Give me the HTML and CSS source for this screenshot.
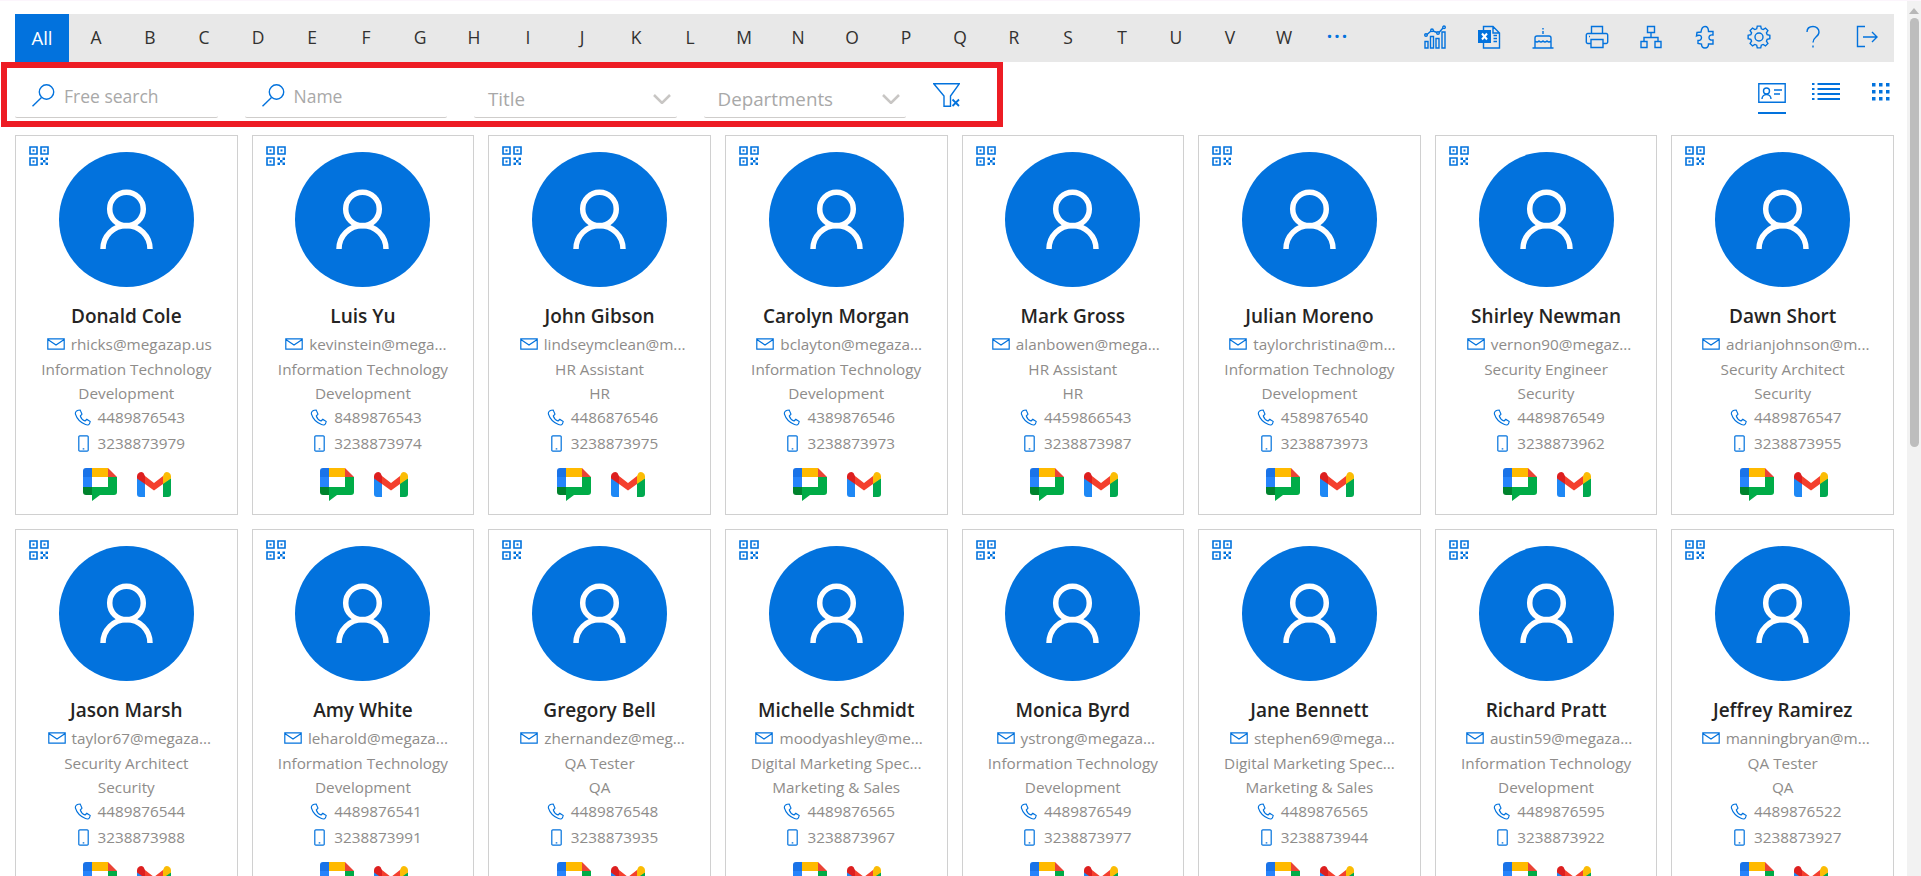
FILE: index.html
```html
<!DOCTYPE html>
<html lang="en">
<head>
    <meta charset="UTF-8">
    <meta name="viewport" content="width=device-width, initial-scale=1.0">
    <title>Employee Directory</title>
    <link rel="stylesheet" href="styles.css">
</head>
<body>

    <!-- Shared icons -->
    <svg class="sprite" xmlns="http://www.w3.org/2000/svg">
        <symbol id="i-chart" viewBox="0 0 24 24">
            <path d="M2 16.5h3V23H2zM7.5 11.5h3V23h-3zM13 13.5h3V23h-3zM19 7h3v16h-3zM4 9.5l4-3.5M10 6l4 1.5M16 7.5l4-4.5"/>
            <circle cx="3" cy="10" r="1.3"/><circle cx="9" cy="5.3" r="1.3"/><circle cx="15" cy="8" r="1.3"/><circle cx="21" cy="2.3" r="1.3"/>
        </symbol>
        <symbol id="i-excel" viewBox="0 0 24 24">
            <path d="M6.5 5V1.5H16L22.5 8v15H6.5v-5M16 1.5V8h6.5M16.5 10.5H20M16.5 13.5H20M16.5 16.5H20"/>
            <rect class="solid" x="1" y="5" width="13" height="13"/>
            <path class="knock" d="M5 8.5l5 6M10 8.5l-5 6"/>
        </symbol>
        <symbol id="i-cake" viewBox="0 0 24 24">
            <path d="M12 3v1.500M12 6v3M4 23V13a2 2 0 0 1 2-2h12a2 2 0 0 1 2 2v10M1.500 23h21M4 16q2 2 4 0q2 2 4 0q2 2 4 0q2 2 4 0"/>
        </symbol>
        <symbol id="i-print" viewBox="0 0 24 24">
            <path d="M6.500 8.500V1.500h11v7M6 18.500H2.800A1.500 1.500 0 0 1 1.300 17v-7a1.500 1.500 0 0 1 1.500-1.500h18.400a1.500 1.500 0 0 1 1.500 1.500v7a1.500 1.500 0 0 1-1.500 1.500H18M6 14.500h12V22.500H6zM4 11.500h1"/>
        </symbol>
        <symbol id="i-org" viewBox="0 0 24 24">
            <path d="M8.500 1.500h7v6h-7zM12 7.500v5M5 16.500v-4h14v4M2 16.500h6v6H2zM16 16.500h6v6h-6z"/>
        </symbol>
        <symbol id="i-puzzle" viewBox="0 0 24 24">
            <path d="M4 7.500L8 7C8.500 3 10 1.500 12 1.500S15.500 3.500 15.500 6.500H20V10c-2.500-.5-4 .5-4 2.500s1.500 3 4 2.500v4h-4.500c0 2.500-1.500 4-3.500 4s-3.500-1.500-3.500-4L5 18.500v-3c2 0 3.500-1 3.500-3S6 9.500 3.500 11z"/>
        </symbol>
        <symbol id="i-gear" viewBox="0 0 24 24">
            <polygon points="9.66,3.83 10.28,1.14 13.72,1.14 14.34,3.83 16.12,4.57 18.47,3.1 20.9,5.53 19.43,7.88 20.17,9.66 22.86,10.28 22.86,13.72 20.17,14.34 19.43,16.12 20.9,18.47 18.47,20.9 16.12,19.43 14.34,20.17 13.72,22.86 10.28,22.86 9.66,20.17 7.88,19.43 5.53,20.9 3.1,18.47 4.57,16.12 3.83,14.34 1.14,13.72 1.14,10.28 3.83,9.66 4.57,7.88 3.1,5.53 5.53,3.1 7.88,4.57"/>
            <circle cx="12" cy="12" r="4"/>
        </symbol>
        <symbol id="i-help" viewBox="0 0 24 24">
            <path d="M6 7c0-3.500 2.500-5.500 6-5.500S18 4 18 7c0 2.500-1.500 4-3.500 5.500-1.700 1.300-2.500 2.500-2.500 5M12 20.500V22.500"/>
        </symbol>
        <symbol id="i-exit" viewBox="0 0 24 24">
            <path d="M10 1.500H2.500v20H10M8 12h14M17 7l5 5-5 5"/>
        </symbol>
        <symbol id="i-search" viewBox="0 0 24 24">
            <circle cx="15.500" cy="8" r="7.200"/>
            <path d="M10.500 13.500L1.500 22.300"/>
        </symbol>
        <symbol id="i-chevron" viewBox="0 0 18 10">
            <path d="M1 1l8 8 8-8"/>
        </symbol>
        <symbol id="i-qr" viewBox="0 0 20 20">
            <path d="M1 1h7v7H1zM12 1h7v7h-7zM1 12h7v7H1z"/>
            <path class="solid" d="M3.500 3.500h2v2h-2zM14.500 3.500h2v2h-2zM3.500 14.500h2v2h-2zM11.500 11.500h2.500v2.500h-2.500zM16.500 11.500h2.500v2.500h-2.500zM14 14h2.500v2.500H14zM11.500 16.500h2.500V19h-2.500zM16.500 16.500h2.500V19h-2.500z"/>
        </symbol>
        <symbol id="i-mail" viewBox="0 0 18 12">
            <path d="M.800.800h16.400v10.400H.800zM.800 1.500L9 7l8.200-5.500"/>
        </symbol>
        <symbol id="i-phone" viewBox="0 0 17 17">
            <path d="M4.200 1.200L6.200 1 8 5.200 6.300 7c.7 2.500 2.600 4.200 4.700 5l1.800-1.700 3.400 2.300-.7 2.200c-.7 1.200-2.300 1.500-4 .8-5-2.100-8.700-6.100-10.100-10.600C1 3.200 2.600 1.600 4.200 1.200z"/>
        </symbol>
        <symbol id="i-mobile" viewBox="0 0 11 17">
            <path d="M1.800.800h7.400a1 1 0 0 1 1 1v13.400a1 1 0 0 1-1 1H1.800a1 1 0 0 1-1-1V1.800a1 1 0 0 1 1-1zM4.700 13.800h1.600"/>
        </symbol>
        <symbol id="i-chat" viewBox="0 0 34 33">
            <path fill="#1a73e8" d="M3 0h6v9H0V3a3 3 0 0 1 3-3z"/>
            <path fill="#2684fc" d="M0 9h9v10H0z"/>
            <path fill="#00832d" d="M0 19h9v8H3a3 3 0 0 1-3-3z"/>
            <path fill="#ffba00" d="M9 0h16v9H9z"/>
            <path fill="#ea4335" d="M25 0l9 9h-9z"/>
            <path fill="#00ac47" d="M25 9h9v15a3 3 0 0 1-3 3H17l-8 6v-6-8h16z"/>
        </symbol>
        <symbol id="i-gmail" viewBox="0 0 34 25">
            <path fill="#1e88f5" d="M0 6v16a3 3 0 0 0 3 3h5V11z"/>
            <path fill="#00a94f" d="M26 11v14h5a3 3 0 0 0 3-3V6z"/>
            <path fill="#f4402e" d="M8 4l9 7 9-7v8l-9 6.500L8 12z"/>
            <path fill="#dd1f1f" d="M0 4a4 4 0 0 1 6.500-3L8 4v8L0 6.500z"/>
            <path fill="#fbbc04" d="M26 4l1.500-3A4 4 0 0 1 34 4v2.500L26 12z"/>
        </symbol>
        <symbol id="i-person" viewBox="0 0 135 135">
            <circle class="avatar-bg" cx="67.500" cy="67.500" r="67.500"/>
            <circle class="avatar-line" cx="67.500" cy="57" r="16.800"/>
            <path class="avatar-line" d="M44 97a23.500 23.500 0 0 1 47 0"/>
        </symbol>
    </svg>

    <div class="page">
        <main class="content">

            <!-- Alphabet bar -->
            <nav class="alpha-bar">
                <a class="alpha active">All</a>
                <a class="alpha">A</a><a class="alpha">B</a><a class="alpha">C</a><a class="alpha">D</a>
                <a class="alpha">E</a><a class="alpha">F</a><a class="alpha">G</a><a class="alpha">H</a>
                <a class="alpha">I</a><a class="alpha">J</a><a class="alpha">K</a><a class="alpha">L</a>
                <a class="alpha">M</a><a class="alpha">N</a><a class="alpha">O</a><a class="alpha">P</a>
                <a class="alpha">Q</a><a class="alpha">R</a><a class="alpha">S</a><a class="alpha">T</a>
                <a class="alpha">U</a><a class="alpha">V</a><a class="alpha">W</a>
                <a class="alpha more">&middot;&middot;&middot;</a>
                <div class="tools">
                    <a class="tool"><svg class="icon"><use href="#i-chart"/></svg></a>
                    <a class="tool"><svg class="icon"><use href="#i-excel"/></svg></a>
                    <a class="tool"><svg class="icon"><use href="#i-cake"/></svg></a>
                    <a class="tool"><svg class="icon"><use href="#i-print"/></svg></a>
                    <a class="tool"><svg class="icon"><use href="#i-org"/></svg></a>
                    <a class="tool"><svg class="icon"><use href="#i-puzzle"/></svg></a>
                    <a class="tool"><svg class="icon"><use href="#i-gear"/></svg></a>
                    <a class="tool"><svg class="icon"><use href="#i-help"/></svg></a>
                    <a class="tool"><svg class="icon"><use href="#i-exit"/></svg></a>
                </div>
            </nav>

            <!-- Filters and view switch -->
            <section class="filter-row">
                <div class="filter-box">
                    <label class="field search">
                        <svg class="icon"><use href="#i-search"/></svg>
                        <input type="text" placeholder="Free search">
                    </label>
                    <label class="field search">
                        <svg class="icon"><use href="#i-search"/></svg>
                        <input type="text" placeholder="Name">
                    </label>
                    <div class="field dropdown">
                        <span>Title</span>
                        <svg class="chevron"><use href="#i-chevron"/></svg>
                    </div>
                    <div class="field dropdown">
                        <span>Departments</span>
                        <svg class="chevron"><use href="#i-chevron"/></svg>
                    </div>
                    <svg class="icon clear-filter" viewBox="0 0 27 24">
                        <path d="M.800.800h25.400L17.500 13v10.200H11V13z"/>
                        <path class="clear-x" d="M19.500 16.500l6.500 6.500M26 16.500L19.500 23"/>
                    </svg>
                </div>
                <div class="views">
                    <a class="view active">
                        <svg class="icon view-card" viewBox="0 0 28 20">
                            <path d="M.800.800h26.400v18.400H.800zM4 16a4.500 4.500 0 0 1 9 0M16 7h8M16 11h6"/>
                            <circle cx="8.500" cy="8" r="3"/>
                        </svg>
                    </a>
                    <a class="view">
                        <svg class="icon view-list" viewBox="0 0 28 18">
                            <path d="M5.500 1H28M5.500 6H28M5.500 11H28M5.500 16H28M0 1h2.500M0 6h2.500M0 11h2.500M0 16h2.500"/>
                        </svg>
                    </a>
                    <a class="view">
                        <svg class="icon view-grid" viewBox="0 0 18 18">
                            <path class="solid" d="M0 0h3.500v3.500H0zM7 0h3.500v3.500H7zM14 0h3.500v3.500H14zM0 7h3.500v3.500H0zM7 7h3.500v3.500H7zM14 7h3.500v3.500H14zM0 14h3.500v3.500H0zM7 14h3.500v3.500H7zM14 14h3.500v3.500H14z"/>
                        </svg>
                    </a>
                </div>
            </section>

            <!-- Employee cards -->
            <section class="cards">

                <article class="card">
                    <svg class="icon qr"><use href="#i-qr"/></svg>
                    <svg class="avatar"><use href="#i-person"/></svg>
                    <h2 class="name">Donald Cole</h2>
                    <p class="contact email"><svg class="icon mail"><use href="#i-mail"/></svg>rhicks@megazap.us</p>
                    <p class="line">Information Technology</p>
                    <p class="line">Development</p>
                    <p class="contact"><svg class="icon phone"><use href="#i-phone"/></svg>4489876543</p>
                    <p class="contact mobile-row"><svg class="icon mobile"><use href="#i-mobile"/></svg>3238873979</p>
                    <div class="apps"><svg class="chat"><use href="#i-chat"/></svg><svg class="gmail"><use href="#i-gmail"/></svg></div>
                </article>

                <article class="card">
                    <svg class="icon qr"><use href="#i-qr"/></svg>
                    <svg class="avatar"><use href="#i-person"/></svg>
                    <h2 class="name">Luis Yu</h2>
                    <p class="contact email"><svg class="icon mail"><use href="#i-mail"/></svg>kevinstein@mega...</p>
                    <p class="line">Information Technology</p>
                    <p class="line">Development</p>
                    <p class="contact"><svg class="icon phone"><use href="#i-phone"/></svg>8489876543</p>
                    <p class="contact mobile-row"><svg class="icon mobile"><use href="#i-mobile"/></svg>3238873974</p>
                    <div class="apps"><svg class="chat"><use href="#i-chat"/></svg><svg class="gmail"><use href="#i-gmail"/></svg></div>
                </article>

                <article class="card">
                    <svg class="icon qr"><use href="#i-qr"/></svg>
                    <svg class="avatar"><use href="#i-person"/></svg>
                    <h2 class="name">John Gibson</h2>
                    <p class="contact email"><svg class="icon mail"><use href="#i-mail"/></svg>lindseymclean@m...</p>
                    <p class="line">HR Assistant</p>
                    <p class="line">HR</p>
                    <p class="contact"><svg class="icon phone"><use href="#i-phone"/></svg>4486876546</p>
                    <p class="contact mobile-row"><svg class="icon mobile"><use href="#i-mobile"/></svg>3238873975</p>
                    <div class="apps"><svg class="chat"><use href="#i-chat"/></svg><svg class="gmail"><use href="#i-gmail"/></svg></div>
                </article>

                <article class="card">
                    <svg class="icon qr"><use href="#i-qr"/></svg>
                    <svg class="avatar"><use href="#i-person"/></svg>
                    <h2 class="name">Carolyn Morgan</h2>
                    <p class="contact email"><svg class="icon mail"><use href="#i-mail"/></svg>bclayton@megaza...</p>
                    <p class="line">Information Technology</p>
                    <p class="line">Development</p>
                    <p class="contact"><svg class="icon phone"><use href="#i-phone"/></svg>4389876546</p>
                    <p class="contact mobile-row"><svg class="icon mobile"><use href="#i-mobile"/></svg>3238873973</p>
                    <div class="apps"><svg class="chat"><use href="#i-chat"/></svg><svg class="gmail"><use href="#i-gmail"/></svg></div>
                </article>

                <article class="card">
                    <svg class="icon qr"><use href="#i-qr"/></svg>
                    <svg class="avatar"><use href="#i-person"/></svg>
                    <h2 class="name">Mark Gross</h2>
                    <p class="contact email"><svg class="icon mail"><use href="#i-mail"/></svg>alanbowen@mega...</p>
                    <p class="line">HR Assistant</p>
                    <p class="line">HR</p>
                    <p class="contact"><svg class="icon phone"><use href="#i-phone"/></svg>4459866543</p>
                    <p class="contact mobile-row"><svg class="icon mobile"><use href="#i-mobile"/></svg>3238873987</p>
                    <div class="apps"><svg class="chat"><use href="#i-chat"/></svg><svg class="gmail"><use href="#i-gmail"/></svg></div>
                </article>

                <article class="card">
                    <svg class="icon qr"><use href="#i-qr"/></svg>
                    <svg class="avatar"><use href="#i-person"/></svg>
                    <h2 class="name">Julian Moreno</h2>
                    <p class="contact email"><svg class="icon mail"><use href="#i-mail"/></svg>taylorchristina@m...</p>
                    <p class="line">Information Technology</p>
                    <p class="line">Development</p>
                    <p class="contact"><svg class="icon phone"><use href="#i-phone"/></svg>4589876540</p>
                    <p class="contact mobile-row"><svg class="icon mobile"><use href="#i-mobile"/></svg>3238873973</p>
                    <div class="apps"><svg class="chat"><use href="#i-chat"/></svg><svg class="gmail"><use href="#i-gmail"/></svg></div>
                </article>

                <article class="card">
                    <svg class="icon qr"><use href="#i-qr"/></svg>
                    <svg class="avatar"><use href="#i-person"/></svg>
                    <h2 class="name">Shirley Newman</h2>
                    <p class="contact email"><svg class="icon mail"><use href="#i-mail"/></svg>vernon90@megaz...</p>
                    <p class="line">Security Engineer</p>
                    <p class="line">Security</p>
                    <p class="contact"><svg class="icon phone"><use href="#i-phone"/></svg>4489876549</p>
                    <p class="contact mobile-row"><svg class="icon mobile"><use href="#i-mobile"/></svg>3238873962</p>
                    <div class="apps"><svg class="chat"><use href="#i-chat"/></svg><svg class="gmail"><use href="#i-gmail"/></svg></div>
                </article>

                <article class="card">
                    <svg class="icon qr"><use href="#i-qr"/></svg>
                    <svg class="avatar"><use href="#i-person"/></svg>
                    <h2 class="name">Dawn Short</h2>
                    <p class="contact email"><svg class="icon mail"><use href="#i-mail"/></svg>adrianjohnson@m...</p>
                    <p class="line">Security Architect</p>
                    <p class="line">Security</p>
                    <p class="contact"><svg class="icon phone"><use href="#i-phone"/></svg>4489876547</p>
                    <p class="contact mobile-row"><svg class="icon mobile"><use href="#i-mobile"/></svg>3238873955</p>
                    <div class="apps"><svg class="chat"><use href="#i-chat"/></svg><svg class="gmail"><use href="#i-gmail"/></svg></div>
                </article>

                <article class="card">
                    <svg class="icon qr"><use href="#i-qr"/></svg>
                    <svg class="avatar"><use href="#i-person"/></svg>
                    <h2 class="name">Jason Marsh</h2>
                    <p class="contact email"><svg class="icon mail"><use href="#i-mail"/></svg>taylor67@megaza...</p>
                    <p class="line">Security Architect</p>
                    <p class="line">Security</p>
                    <p class="contact"><svg class="icon phone"><use href="#i-phone"/></svg>4489876544</p>
                    <p class="contact mobile-row"><svg class="icon mobile"><use href="#i-mobile"/></svg>3238873988</p>
                    <div class="apps"><svg class="chat"><use href="#i-chat"/></svg><svg class="gmail"><use href="#i-gmail"/></svg></div>
                </article>

                <article class="card">
                    <svg class="icon qr"><use href="#i-qr"/></svg>
                    <svg class="avatar"><use href="#i-person"/></svg>
                    <h2 class="name">Amy White</h2>
                    <p class="contact email"><svg class="icon mail"><use href="#i-mail"/></svg>leharold@megaza...</p>
                    <p class="line">Information Technology</p>
                    <p class="line">Development</p>
                    <p class="contact"><svg class="icon phone"><use href="#i-phone"/></svg>4489876541</p>
                    <p class="contact mobile-row"><svg class="icon mobile"><use href="#i-mobile"/></svg>3238873991</p>
                    <div class="apps"><svg class="chat"><use href="#i-chat"/></svg><svg class="gmail"><use href="#i-gmail"/></svg></div>
                </article>

                <article class="card">
                    <svg class="icon qr"><use href="#i-qr"/></svg>
                    <svg class="avatar"><use href="#i-person"/></svg>
                    <h2 class="name">Gregory Bell</h2>
                    <p class="contact email"><svg class="icon mail"><use href="#i-mail"/></svg>zhernandez@meg...</p>
                    <p class="line">QA Tester</p>
                    <p class="line">QA</p>
                    <p class="contact"><svg class="icon phone"><use href="#i-phone"/></svg>4489876548</p>
                    <p class="contact mobile-row"><svg class="icon mobile"><use href="#i-mobile"/></svg>3238873935</p>
                    <div class="apps"><svg class="chat"><use href="#i-chat"/></svg><svg class="gmail"><use href="#i-gmail"/></svg></div>
                </article>

                <article class="card">
                    <svg class="icon qr"><use href="#i-qr"/></svg>
                    <svg class="avatar"><use href="#i-person"/></svg>
                    <h2 class="name">Michelle Schmidt</h2>
                    <p class="contact email"><svg class="icon mail"><use href="#i-mail"/></svg>moodyashley@me...</p>
                    <p class="line">Digital Marketing Spec...</p>
                    <p class="line">Marketing &amp; Sales</p>
                    <p class="contact"><svg class="icon phone"><use href="#i-phone"/></svg>4489876565</p>
                    <p class="contact mobile-row"><svg class="icon mobile"><use href="#i-mobile"/></svg>3238873967</p>
                    <div class="apps"><svg class="chat"><use href="#i-chat"/></svg><svg class="gmail"><use href="#i-gmail"/></svg></div>
                </article>

                <article class="card">
                    <svg class="icon qr"><use href="#i-qr"/></svg>
                    <svg class="avatar"><use href="#i-person"/></svg>
                    <h2 class="name">Monica Byrd</h2>
                    <p class="contact email"><svg class="icon mail"><use href="#i-mail"/></svg>ystrong@megaza...</p>
                    <p class="line">Information Technology</p>
                    <p class="line">Development</p>
                    <p class="contact"><svg class="icon phone"><use href="#i-phone"/></svg>4489876549</p>
                    <p class="contact mobile-row"><svg class="icon mobile"><use href="#i-mobile"/></svg>3238873977</p>
                    <div class="apps"><svg class="chat"><use href="#i-chat"/></svg><svg class="gmail"><use href="#i-gmail"/></svg></div>
                </article>

                <article class="card">
                    <svg class="icon qr"><use href="#i-qr"/></svg>
                    <svg class="avatar"><use href="#i-person"/></svg>
                    <h2 class="name">Jane Bennett</h2>
                    <p class="contact email"><svg class="icon mail"><use href="#i-mail"/></svg>stephen69@mega...</p>
                    <p class="line">Digital Marketing Spec...</p>
                    <p class="line">Marketing &amp; Sales</p>
                    <p class="contact"><svg class="icon phone"><use href="#i-phone"/></svg>4489876565</p>
                    <p class="contact mobile-row"><svg class="icon mobile"><use href="#i-mobile"/></svg>3238873944</p>
                    <div class="apps"><svg class="chat"><use href="#i-chat"/></svg><svg class="gmail"><use href="#i-gmail"/></svg></div>
                </article>

                <article class="card">
                    <svg class="icon qr"><use href="#i-qr"/></svg>
                    <svg class="avatar"><use href="#i-person"/></svg>
                    <h2 class="name">Richard Pratt</h2>
                    <p class="contact email"><svg class="icon mail"><use href="#i-mail"/></svg>austin59@megaza...</p>
                    <p class="line">Information Technology</p>
                    <p class="line">Development</p>
                    <p class="contact"><svg class="icon phone"><use href="#i-phone"/></svg>4489876595</p>
                    <p class="contact mobile-row"><svg class="icon mobile"><use href="#i-mobile"/></svg>3238873922</p>
                    <div class="apps"><svg class="chat"><use href="#i-chat"/></svg><svg class="gmail"><use href="#i-gmail"/></svg></div>
                </article>

                <article class="card">
                    <svg class="icon qr"><use href="#i-qr"/></svg>
                    <svg class="avatar"><use href="#i-person"/></svg>
                    <h2 class="name">Jeffrey Ramirez</h2>
                    <p class="contact email"><svg class="icon mail"><use href="#i-mail"/></svg>manningbryan@m...</p>
                    <p class="line">QA Tester</p>
                    <p class="line">QA</p>
                    <p class="contact"><svg class="icon phone"><use href="#i-phone"/></svg>4489876522</p>
                    <p class="contact mobile-row"><svg class="icon mobile"><use href="#i-mobile"/></svg>3238873927</p>
                    <div class="apps"><svg class="chat"><use href="#i-chat"/></svg><svg class="gmail"><use href="#i-gmail"/></svg></div>
                </article>

            </section>
        </main>

        <!-- Page scrollbar -->
        <aside class="scrollbar">
            <span class="scroll-arrow"></span>
            <span class="scroll-thumb"></span>
        </aside>
    </div>

</body>
</html>
```

FILE: styles.css
```css
* {
    box-sizing: border-box;
}

body {
    margin: 0;
    font-family: "Open Sans", "Noto Sans", sans-serif;
    background-color: #ffffff;
    color: #8e8c8a;
}

.sprite {
    display: none;
}

.page {
    display: flex;
    height: 876px;
    overflow: hidden;
    border-top: 1px solid #fcf5fc;
}

.content {
    flex: 1;
    min-width: 0;
    padding: 13px 13px 0 15px;
}

/* Shared icon look */
.icon {
    fill: none;
    stroke: #0272dd;
    stroke-width: 1.4;
    width: 24px;
    height: 24px;
}

.solid {
    fill: #0272dd;
    stroke: none;
}

.knock {
    stroke: #ffffff;
    stroke-width: 2;
}

/* Alphabet bar */
.alpha-bar {
    display: flex;
    align-items: center;
    height: 48px;
    background-color: #e8e8e8;
}

.alpha {
    width: 54px;
    height: 48px;
    line-height: 47px;
    text-align: center;
    font-size: 17.500px;
    color: #323130;
}

.alpha.active {
    background-color: #0272dd;
    color: #ffffff;
    font-size: 18.500px;
}

.alpha.more {
    color: #0272dd;
    font-size: 19px;
    font-weight: 700;
    letter-spacing: 2px;
    line-height: 44px;
}

.tools {
    display: flex;
    margin-left: auto;
}

.tool {
    display: flex;
    justify-content: center;
    align-items: center;
    width: 54px;
    height: 48px;
    padding-bottom: 2px;
}

/* Filter row */
.filter-row {
    display: flex;
    align-items: flex-start;
    height: 73px;
}

.filter-box {
    display: flex;
    align-items: flex-end;
    gap: 27px;
    width: 1002px;
    height: 65px;
    margin-left: -14px;
    padding: 0 0 3px 8px;
    border: 6px solid #ed1c24;
}

.field {
    display: flex;
    align-items: center;
    width: 202.500px;
    height: 40px;
    border-bottom: 1.500px solid #cfcdcb;
    border-radius: 2px;
    font-size: 17.500px;
    color: #a8a8a8;
}

.field.search {
    gap: 9px;
    padding: 0 0 4px 16px;
}

.field input {
    flex: 1;
    min-width: 0;
    padding: 0;
    border: none;
    outline: none;
    background: none;
    font: inherit;
}

.field input::placeholder {
    color: #a8a8a8;
}

.field.dropdown {
    justify-content: space-between;
    padding: 2px 6px 0 14px;
    font-size: 18.800px;
}

.chevron {
    fill: none;
    stroke: #c8c6c4;
    stroke-width: 2.500;
    width: 18px;
    height: 10px;
}

.clear-filter {
    align-self: flex-start;
    width: 27px;
    height: 24px;
    margin-top: 15px;
}

.clear-x {
    stroke-width: 1.800;
}

/* View switch */
.views {
    display: flex;
    align-items: flex-start;
    gap: 26px;
    margin: 21px 4px 0 auto;
}

.view {
    display: block;
}

.view.active {
    height: 31px;
    border-bottom: 2px solid #0272dd;
}

.view-card {
    display: block;
    width: 28px;
    height: 20px;
}

.view-list {
    display: block;
    width: 28px;
    height: 18px;
    stroke-width: 2;
}

.view-grid {
    display: block;
    width: 18px;
    height: 18px;
    margin-left: 6px;
}

/* Employee cards */
.cards {
    display: grid;
    grid-template-columns: repeat(8, 1fr);
    gap: 14px;
}

.card {
    position: relative;
    height: 380px;
    padding-top: 16px;
    border: 1px solid #d0d0d0;
    text-align: center;
    font-size: 15.300px;
}

.qr {
    position: absolute;
    top: 10px;
    left: 13px;
    width: 20px;
    height: 20px;
    stroke-width: 1.600;
}

.avatar {
    display: block;
    width: 135px;
    height: 135px;
    margin: 0 auto;
}

.avatar-bg {
    fill: #0272dd;
    stroke: none;
}

.avatar-line {
    fill: none;
    stroke: #ffffff;
    stroke-width: 5.500;
}

.name {
    margin: 16px 0 2px;
    height: 26px;
    line-height: 26px;
    font-size: 19px;
    font-weight: 600;
    color: #252423;
}

.line {
    margin: 0;
    height: 24px;
    line-height: 24px;
}

.contact {
    display: flex;
    justify-content: center;
    align-items: center;
    gap: 7px;
    margin: 0;
    height: 24px;
    padding-left: 6px;
}

.contact.email {
    height: 26px;
    gap: 6px;
}

.contact.mobile-row {
    margin-top: 2px;
    padding-left: 10px;
    gap: 9px;
}

.mail {
    width: 18px;
    height: 12px;
    stroke-width: 1.200;
}

.phone {
    width: 17px;
    height: 17px;
    stroke-width: 1.100;
}

.mobile {
    width: 11px;
    height: 17px;
    stroke-width: 1.200;
}

.apps {
    display: flex;
    justify-content: center;
    align-items: center;
    gap: 20px;
    margin-top: 13px;
    padding-left: 2px;
}

.chat {
    width: 34px;
    height: 33px;
}

.gmail {
    width: 34px;
    height: 25px;
}

/* Scrollbar */
.scrollbar {
    display: flex;
    flex-direction: column;
    align-items: center;
    width: 14px;
    padding-top: 7px;
    background-color: #f2f2f2;
}

.scroll-arrow {
    width: 0;
    height: 0;
    border-left: 5px solid transparent;
    border-right: 5px solid transparent;
    border-bottom: 6px solid #b8b8b8;
}

.scroll-thumb {
    width: 9px;
    height: 429px;
    margin-top: 4px;
    border-radius: 5px;
    background-color: #bdbdbd;
}
```
